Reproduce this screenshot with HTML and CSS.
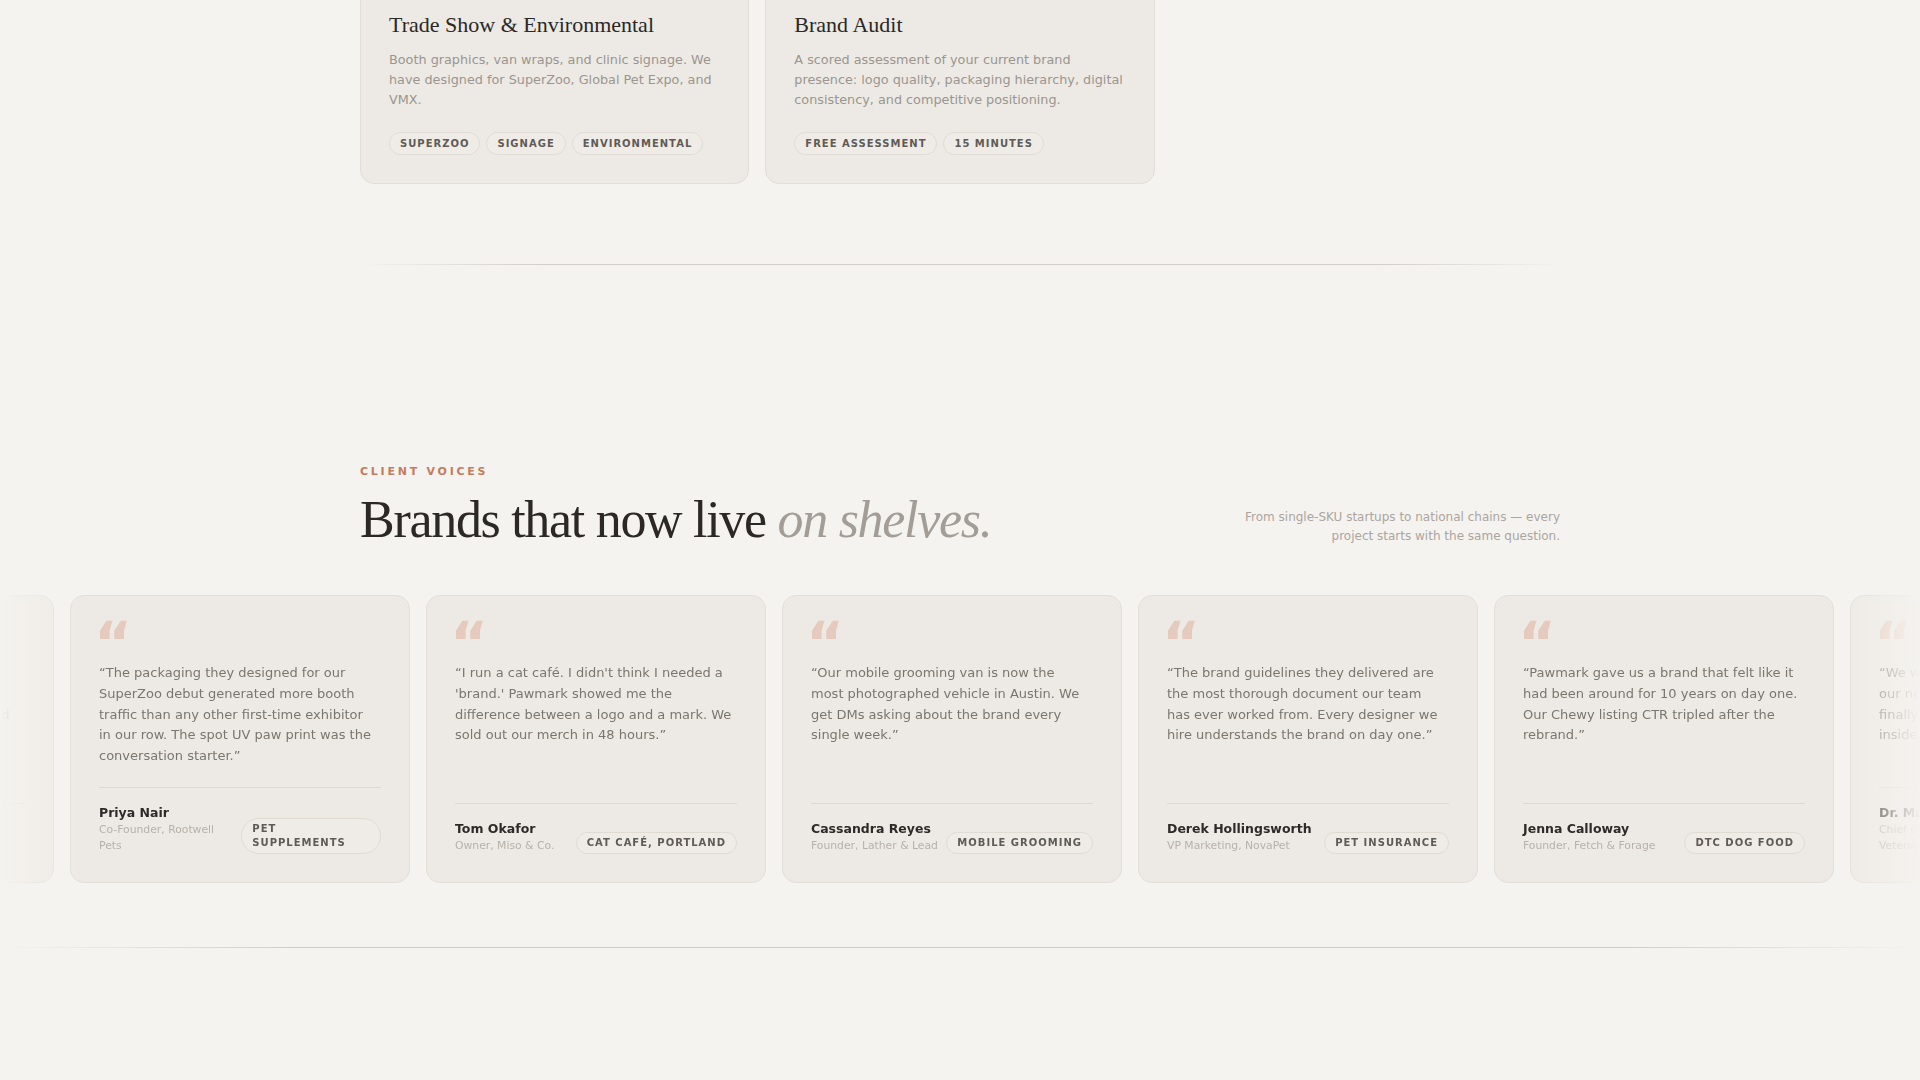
FILE: index.html
```html
<!DOCTYPE html>
<html lang="en">
<head>
  <meta charset="UTF-8" />
  <title>Pawmark - Brand Studio for Pet Companies</title>
  <meta name="viewport" content="width=device-width, initial-scale=1.0">
  <link rel="stylesheet" href="styles.css">
</head>
<body>
  <section class="services">
    <div class="container service-grid">
      <div class="service-card">
        <h3>Trade Show &amp; Environmental</h3>
        <p>Booth graphics, van wraps, and clinic signage. We have designed for SuperZoo, Global Pet Expo, and VMX.</p>
        <div class="tags">
          <span class="tag">SuperZoo</span>
          <span class="tag">Signage</span>
          <span class="tag">Environmental</span>
        </div>
      </div>
      <div class="service-card">
        <h3>Brand Audit</h3>
        <p>A scored assessment of your current brand presence: logo quality, packaging hierarchy, digital consistency, and competitive positioning.</p>
        <div class="tags">
          <span class="tag">Free Assessment</span>
          <span class="tag">15 Minutes</span>
        </div>
      </div>
    </div>
  </section>

  <div class="container">
    <div class="divider"></div>
  </div>

  <section class="voices">
    <div class="container voices-head">
      <div>
        <div class="eyebrow">Client Voices</div>
        <h2>Brands that now live <em>on shelves.</em></h2>
      </div>
      <p class="voices-note">From single-SKU startups to national chains — every project starts with the same question.</p>
    </div>

    <div class="marquee">
      <div class="marquee-track">
        <div class="voice-card">
          <div class="mark">&ldquo;</div>
          <p class="quote">“We were nervous about changing a name our whole town knows. They kept the warmth and made it look like we had always been this clinic.”</p>
          <div class="author-row">
            <div class="author">
              <div class="name">Dr. Maya Lindqvist</div>
              <div class="role">Chief of Staff, Meridian Vet</div>
            </div>
          </div>
        </div>
        <div class="voice-card">
          <div class="mark">&ldquo;</div>
          <p class="quote">“The packaging they designed for our SuperZoo debut generated more booth traffic than any other first-time exhibitor in our row. The spot UV paw print was the conversation starter.”</p>
          <div class="author-row">
            <div class="author">
              <div class="name">Priya Nair</div>
              <div class="role">Co-Founder, Rootwell Pets</div>
            </div>
            <span class="tag">Pet Supplements</span>
          </div>
        </div>
        <div class="voice-card">
          <div class="mark">&ldquo;</div>
          <p class="quote">“I run a cat café. I didn't think I needed a 'brand.' Pawmark showed me the difference between a logo and a mark. We sold out our merch in 48 hours.”</p>
          <div class="author-row">
            <div class="author">
              <div class="name">Tom Okafor</div>
              <div class="role">Owner, Miso &amp; Co.</div>
            </div>
            <span class="tag">Cat Café, Portland</span>
          </div>
        </div>
        <div class="voice-card">
          <div class="mark">&ldquo;</div>
          <p class="quote">“Our mobile grooming van is now the most photographed vehicle in Austin. We get DMs asking about the brand every single week.”</p>
          <div class="author-row">
            <div class="author">
              <div class="name">Cassandra Reyes</div>
              <div class="role">Founder, Lather &amp; Lead</div>
            </div>
            <span class="tag">Mobile Grooming</span>
          </div>
        </div>
        <div class="voice-card">
          <div class="mark">&ldquo;</div>
          <p class="quote">“The brand guidelines they delivered are the most thorough document our team has ever worked from. Every designer we hire understands the brand on day one.”</p>
          <div class="author-row">
            <div class="author">
              <div class="name">Derek Hollingsworth</div>
              <div class="role">VP Marketing, NovaPet</div>
            </div>
            <span class="tag">Pet Insurance</span>
          </div>
        </div>
        <div class="voice-card">
          <div class="mark">&ldquo;</div>
          <p class="quote">“Pawmark gave us a brand that felt like it had been around for 10 years on day one. Our Chewy listing CTR tripled after the rebrand.”</p>
          <div class="author-row">
            <div class="author">
              <div class="name">Jenna Calloway</div>
              <div class="role">Founder, Fetch &amp; Forage</div>
            </div>
            <span class="tag">DTC Dog Food</span>
          </div>
        </div>
        <div class="voice-card">
          <div class="mark">&ldquo;</div>
          <p class="quote">“We wanted a clinic brand that felt warm, our new mark does that. The identity finally matches the care our patients get inside.”</p>
          <div class="author-row">
            <div class="author">
              <div class="name">Dr. Maya Lindqvist</div>
              <div class="role">Chief of Staff, Meridian Veterinary</div>
            </div>
            <span class="tag">Vet Clinic</span>
          </div>
        </div>
      </div>
    </div>
  </section>

  <div class="divider wide"></div>
</body>
</html>
```

FILE: styles.css
```css
:root {
  --bg: #f5f3ef;
  --card: #edeae5;
  --card-border: #e2ded8;
  --ink: #2b2825;
  --muted: #9b958f;
  --quote: #7b756f;
  --soft: #b7b1ab;
  --accent: #c47b5d;
  --line: #d3cec7;
}

* {
  box-sizing: border-box;
}

body {
  margin: 0;
  background: var(--bg);
  color: var(--ink);
  font-family: 'DejaVu Sans', sans-serif;
  overflow-x: hidden;
}

.container {
  width: 1200px;
  margin: 0 auto;
}

/* services grid (last row) */
.services {
  margin-top: -17px;
  padding-bottom: 80px;
}
.service-grid {
  display: grid;
  grid-template-columns: repeat(3, 1fr);
  gap: 16px;
}
.service-card {
  background: var(--card);
  border: 1px solid var(--card-border);
  border-radius: 14px;
  padding: 28px;
}
.service-card h3 {
  font-family: 'Liberation Serif', serif;
  font-weight: 400;
  font-size: 22px;
  line-height: 1.2;
  margin: 0 0 12px;
  color: var(--ink);
}
.service-card p {
  font-size: 12.8px;
  line-height: 20px;
  color: var(--muted);
  margin: 0 0 22px;
}

.tags {
  display: flex;
  flex-wrap: wrap;
  gap: 6px;
}
.tag {
  font-size: 10px;
  font-weight: 700;
  line-height: 14px;
  letter-spacing: 0.1em;
  text-transform: uppercase;
  color: #5f5a55;
  border: 1px solid #e0dbd4;
  border-radius: 999px;
  padding: 3.5px 10px;
  background: rgba(255, 255, 255, 0.12);
}

.divider {
  height: 1px;
  background: linear-gradient(90deg, transparent, var(--line) 15%, var(--line) 85%, transparent);
}
.divider.wide {
  width: 100%;
}

/* client voices */
.voices {
  padding-top: 199px;
  padding-bottom: 64px;
}
.voices-head {
  display: flex;
  justify-content: space-between;
  align-items: flex-end;
  margin-bottom: 47px;
}
.eyebrow {
  font-size: 11px;
  font-weight: 700;
  line-height: 1.5;
  letter-spacing: 0.25em;
  text-transform: uppercase;
  color: var(--accent);
  margin-bottom: 10px;
}
.voices-head h2 {
  font-family: 'Liberation Serif', serif;
  font-weight: 400;
  font-size: 52px;
  line-height: 1.1;
  letter-spacing: -0.025em;
  margin: 0;
  color: var(--ink);
}
.voices-head h2 em {
  color: #a39d97;
}
.voices-note {
  max-width: 330px;
  margin: 0 0 2px;
  font-size: 12px;
  line-height: 1.6;
  color: #aba59f;
  text-align: right;
}

.marquee {
  overflow: hidden;
  -webkit-mask-image: linear-gradient(90deg, transparent 0, #000 80px, #000 calc(100% - 80px), transparent 100%);
  mask-image: linear-gradient(90deg, transparent 0, #000 80px, #000 calc(100% - 80px), transparent 100%);
}
.marquee-track {
  display: flex;
  gap: 16px;
  width: max-content;
  transform: translateX(-286px);
}

.voice-card {
  flex: none;
  width: 340px;
  display: flex;
  flex-direction: column;
  background: var(--card);
  border: 1px solid var(--card-border);
  border-radius: 14px;
  padding: 28px;
}
.mark {
  font-family: 'DejaVu Sans', sans-serif;
  font-weight: 700;
  font-size: 58px;
  line-height: 40px;
  height: 40px;
  margin: 0 0 -1px -5px;
  color: #e5cabd;
}
.quote {
  flex: 1;
  margin: 0 0 20px;
  padding-right: 5px;
  font-size: 13px;
  line-height: 20.8px;
  color: var(--quote);
}
.author-row {
  display: flex;
  justify-content: space-between;
  align-items: flex-end;
  gap: 6px;
  border-top: 1px solid #ddd8d1;
  padding-top: 16px;
}
.name {
  font-size: 12.5px;
  font-weight: 700;
  line-height: 18px;
  color: #2d2a27;
}
.role {
  font-size: 10.8px;
  line-height: 16px;
  color: var(--soft);
}
.voice-card .tag {
  padding: 3px 10px;
}
```
